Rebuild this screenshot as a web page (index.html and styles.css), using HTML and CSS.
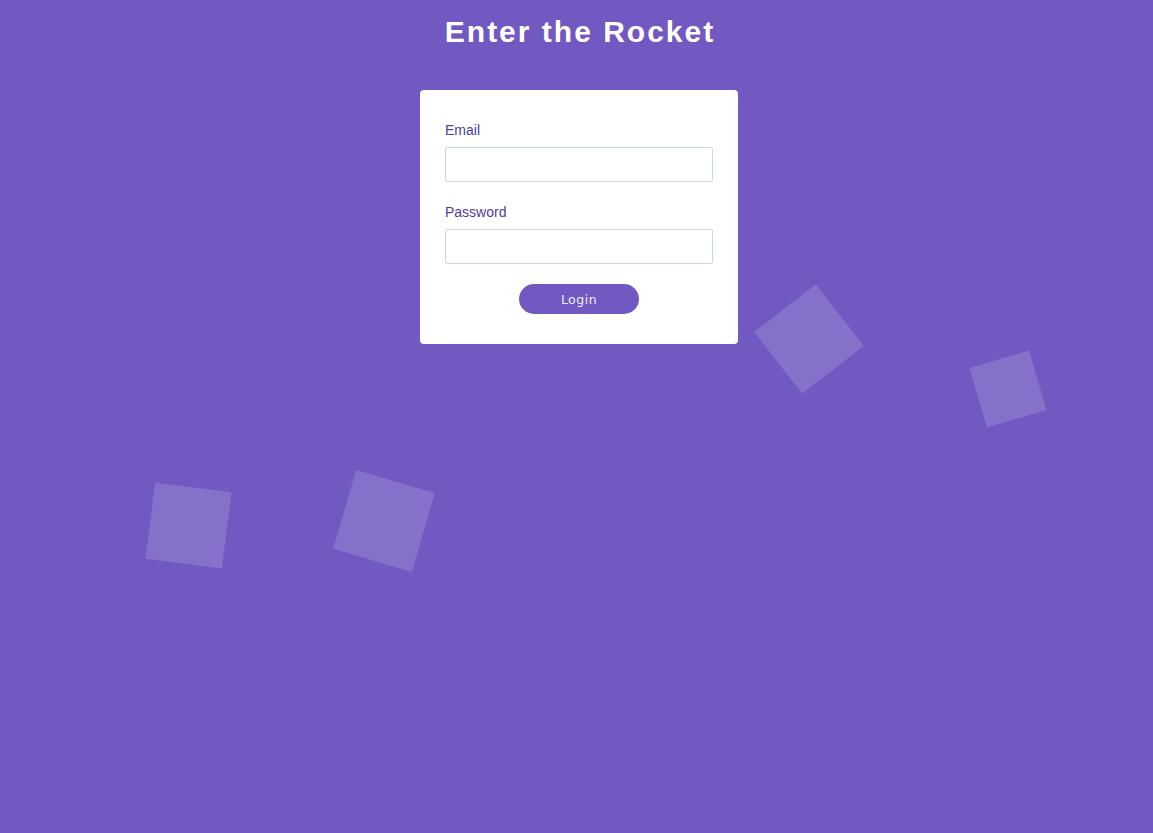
FILE: index.html
```html
<!DOCTYPE html>
<html lang="en">
<head>
<meta charset="utf-8">
<title>Enter the Rocket</title>
<link rel="stylesheet" href="styles.css">
</head>
<body>
<div class="scene">
  <div class="shapes" aria-hidden="true">
    <span class="square sq-a"></span>
    <span class="square sq-b"></span>
    <span class="square sq-c"></span>
    <span class="square sq-d"></span>
  </div>
  <main class="content">
    <h1 class="title">Enter the Rocket</h1>
    <form class="card">
      <label class="field">
        <span class="field-label">Email</span>
        <input class="field-input" type="email">
      </label>
      <label class="field">
        <span class="field-label">Password</span>
        <input class="field-input" type="password">
      </label>
      <div class="actions">
        <button class="btn" type="button">Login</button>
      </div>
    </form>
  </main>
</div>
</body>
</html>
```

FILE: styles.css
```css
* { box-sizing: border-box; }

html, body {
  margin: 0;
  height: 100%;
}

body {
  background: #7159c1;
  font-family: "Liberation Sans", Arial, sans-serif;
  overflow: hidden;
}

.scene {
  position: relative;
  min-height: 100%;
  padding-left: 5px;
}

.content {
  position: relative;
  display: flex;
  flex-direction: column;
  align-items: center;
}

.title {
  margin: 13px 0 0;
  padding-left: 2px;
  font-size: 30px;
  line-height: 38px;
  font-weight: 700;
  letter-spacing: 2px;
  color: #fff;
}

.card {
  margin-top: 39px;
  width: 318px;
  background: #fff;
  border-radius: 4px;
  padding: 32px 25px 30px;
  display: flex;
  flex-direction: column;
}

.field {
  display: flex;
  flex-direction: column;
  margin-bottom: 22px;
}

.field + .field {
  margin-bottom: 20px;
}

.field-label {
  font-size: 14px;
  line-height: 16px;
  color: #4d3d9d;
  margin-bottom: 9px;
}

.field-input {
  height: 35px;
  border: 1px solid #c8d8eb;
  border-radius: 2px;
  background: #fff;
  padding: 0 10px;
  font-size: 14px;
  outline: none;
}

.actions {
  display: flex;
  justify-content: center;
}

.btn {
  width: 120px;
  height: 30px;
  border: 0;
  border-radius: 15px;
  background: #7159c1;
  color: #f0ecfa;
  font-family: "DejaVu Sans", sans-serif;
  font-size: 12.5px;
  letter-spacing: 0.5px;
  cursor: pointer;
}

.shapes {
  position: absolute;
  inset: 0;
  pointer-events: none;
}

.square {
  position: absolute;
  background: rgba(255, 255, 255, 0.15);
}

.sq-a {
  width: 78px; height: 78px;
  left: 770px; top: 300px;
  transform: rotate(-37.8deg);
}

.sq-b {
  width: 62px; height: 62px;
  left: 977px; top: 357.5px;
  transform: rotate(-16.3deg);
}

.sq-c {
  width: 77px; height: 77px;
  left: 150px; top: 487px;
  transform: rotate(7.3deg);
}

.sq-d {
  width: 82px; height: 82px;
  left: 342.5px; top: 479.5px;
  transform: rotate(16.4deg);
}
```
